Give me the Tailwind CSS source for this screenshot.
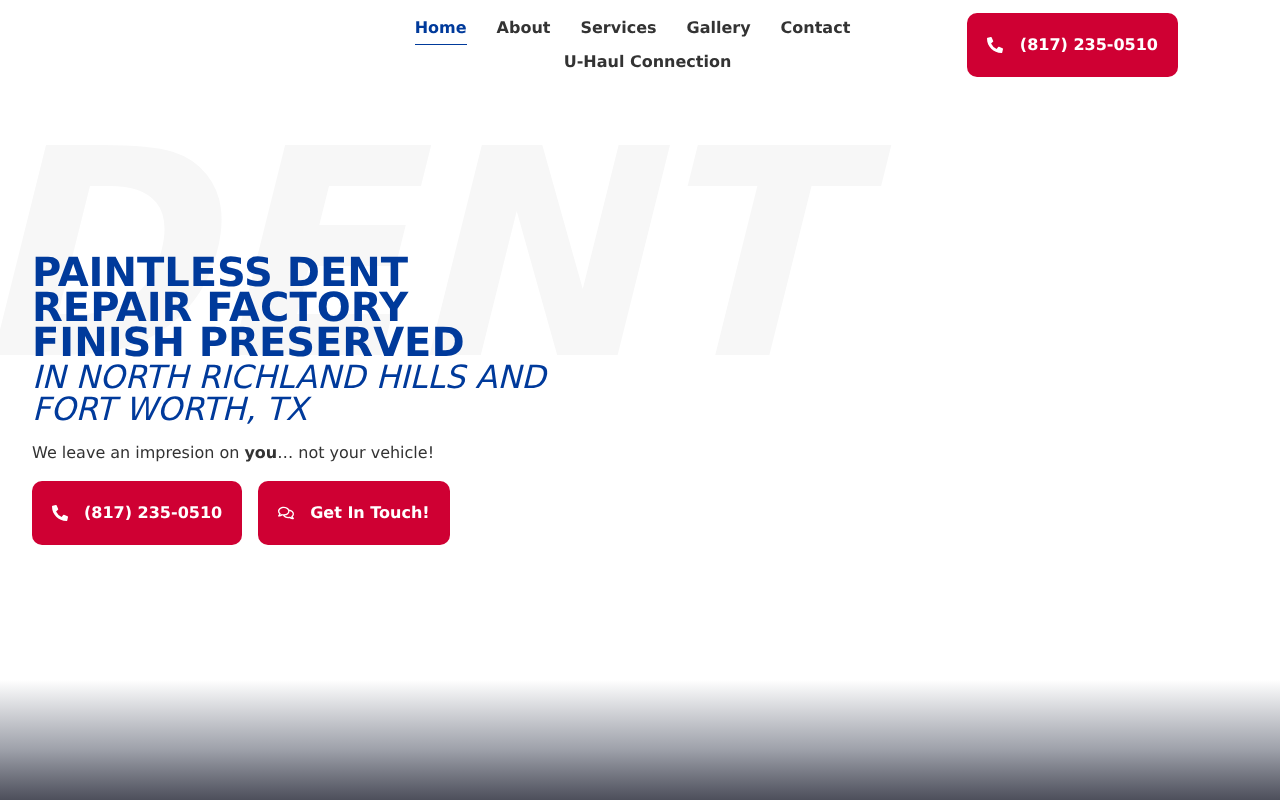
<!DOCTYPE html>
<html lang="en">
<head>
  <meta charset="UTF-8" />
  <title>Paintless Dent Repair</title>
  <script src="https://cdn.jsdelivr.net/npm/@tailwindcss/browser@4"></script>
</head>
<body class="bg-white text-[#333333] font-['DejaVu_Sans',sans-serif] [text-rendering:geometricPrecision]">
  <div class="relative h-[800px] overflow-hidden">

    <!-- Header -->
    <header class="relative z-10 flex h-[90px] items-center pl-[411.5px] pr-[102px] will-change-transform">
      <nav class="flex w-[472px] flex-wrap justify-center text-[16px] font-bold leading-[20px]">
        <a href="#" class="mr-[30px] border-b border-[#003a9b] pt-[7px] pb-[6px] text-[#003a9b]">Home</a>
        <a href="#" class="mr-[30px] pt-[7px] pb-[7px]">About</a>
        <a href="#" class="mr-[30px] pt-[7px] pb-[7px]">Services</a>
        <a href="#" class="mr-[30px] pt-[7px] pb-[7px]">Gallery</a>
        <a href="#" class="mr-[30px] pt-[7px] pb-[7px]">Contact</a>
        <a href="#" class="pt-[7px] pb-[7px]">U-Haul Connection</a>
      </nav>
      <a href="#" class="ml-auto flex h-16 w-[211px] items-center justify-between rounded-[10px] bg-[#cf0033] px-5 text-[16px] font-bold text-white">
        <svg class="h-4 w-4 fill-white" viewBox="0 0 512 512"><path d="M497.39 361.8l-112-48a24 24 0 0 0-28 6.9l-49.6 60.6A370.66 370.66 0 0 1 130.6 204.11l60.6-49.6a23.94 23.94 0 0 0 6.9-28l-48-112A24.16 24.16 0 0 0 122.6.61l-104 24A24 24 0 0 0 0 48c0 256.5 207.9 464 464 464a24 24 0 0 0 23.4-18.6l24-104a24.29 24.29 0 0 0-14.01-27.6z"/></svg>
        <span>(817) 235-0510</span>
      </a>
    </header>

    <!-- Watermark: the reference slants the upright face, so skew it around the baseline -->
    <div class="absolute left-[-33px] top-[86px] origin-[0_270px] -skew-x-[14deg] select-none text-[288px] font-bold leading-[340px] text-[#f7f7f7]">DENT</div>

    <!-- Hero -->
    <main class="relative z-10 w-[560px] pl-8 pt-[166px] will-change-transform">
      <h1 class="text-[40px] font-bold leading-[35px] text-[#003a9b]">
        PAINTLESS DENT REPAIR FACTORY FINISH PRESERVED
        <span class="block origin-[0_27px] -skew-x-[14deg] text-[32px] font-normal leading-[32px]">IN NORTH RICHLAND HILLS AND</span>
        <span class="block origin-[0_27px] -skew-x-[14deg] text-[32px] font-normal leading-[32px]">FORT WORTH, TX</span>
      </h1>
      <p class="mt-[15px] text-[16px] leading-[26px]">We leave an impresion on <b>you</b>… not your vehicle!</p>
      <div class="mt-[15px] flex gap-4">
        <a href="#" class="flex h-16 items-center gap-4 rounded-[10px] bg-[#cf0033] px-5 text-[16px] font-bold text-white">
          <svg class="h-4 w-4 fill-white" viewBox="0 0 512 512"><path d="M497.39 361.8l-112-48a24 24 0 0 0-28 6.9l-49.6 60.6A370.66 370.66 0 0 1 130.6 204.11l60.6-49.6a23.94 23.94 0 0 0 6.9-28l-48-112A24.16 24.16 0 0 0 122.6.61l-104 24A24 24 0 0 0 0 48c0 256.5 207.9 464 464 464a24 24 0 0 0 23.4-18.6l24-104a24.29 24.29 0 0 0-14.01-27.6z"/></svg>
          <span>(817) 235-0510</span>
        </a>
        <a href="#" class="flex h-16 items-center gap-4 rounded-[10px] bg-[#cf0033] px-5 text-[16px] font-bold text-white">
          <svg class="h-4 w-4 fill-white" viewBox="0 0 576 512"><path d="M532 386.2c27.5-27.1 44-61.1 44-98.2 0-80-76.5-146.1-176.2-157.9C368.3 72.5 294.3 32 208 32 93.1 32 0 103.6 0 192c0 37 16.5 71 44 98.2-15.3 30.7-37.3 54.5-37.7 54.9-6.3 6.7-8.1 16.5-4.4 25 3.6 8.5 12 14 21.2 14 53.5 0 96.7-20.2 125.2-38.8 9.2 2.1 18.7 3.7 28.4 4.9C208.1 407.6 281.8 448 368 448c20.8 0 40.8-2.4 59.8-6.8C456.3 459.7 499.4 480 553 480c9.2 0 17.5-5.5 21.2-14 3.6-8.5 1.9-18.3-4.4-25-.4-.3-22.5-24.1-37.8-54.8zm-392.8-92.3L122.1 305c-14.1 9.1-28.5 16.3-43.1 21.4 2.7-4.7 5.4-9.7 8-14.8l15.5-31.1L77.7 256C64.2 242.6 48 220.7 48 192c0-60.7 73.3-112 160-112s160 51.3 160 112-73.3 112-160 112c-16.5 0-33-1.9-49-5.6l-19.8-4.5zM498.3 352l-24.7 24.4 15.5 31.1c2.6 5.1 5.3 10.1 8 14.8-14.6-5.1-29-12.3-43.1-21.4l-17.1-11.1-19.9 4.6c-16 3.7-32.5 5.6-49 5.6-54 0-102.2-20.1-131.3-49.7C338 339.5 416 272.9 416 192c0-3.4-.4-6.7-.7-10C479.7 196.5 528 238.8 528 288c0 28.7-16.2 50.6-29.7 64z"/></svg>
          <span>Get In Touch!</span>
        </a>
      </div>
    </main>

    <!-- Bottom fade -->
    <div class="absolute inset-x-0 bottom-0 h-[120px] bg-gradient-to-b from-white via-[#9ea1aa] via-[58%] to-[#4d4f5b]"></div>
  </div>
</body>
</html>
